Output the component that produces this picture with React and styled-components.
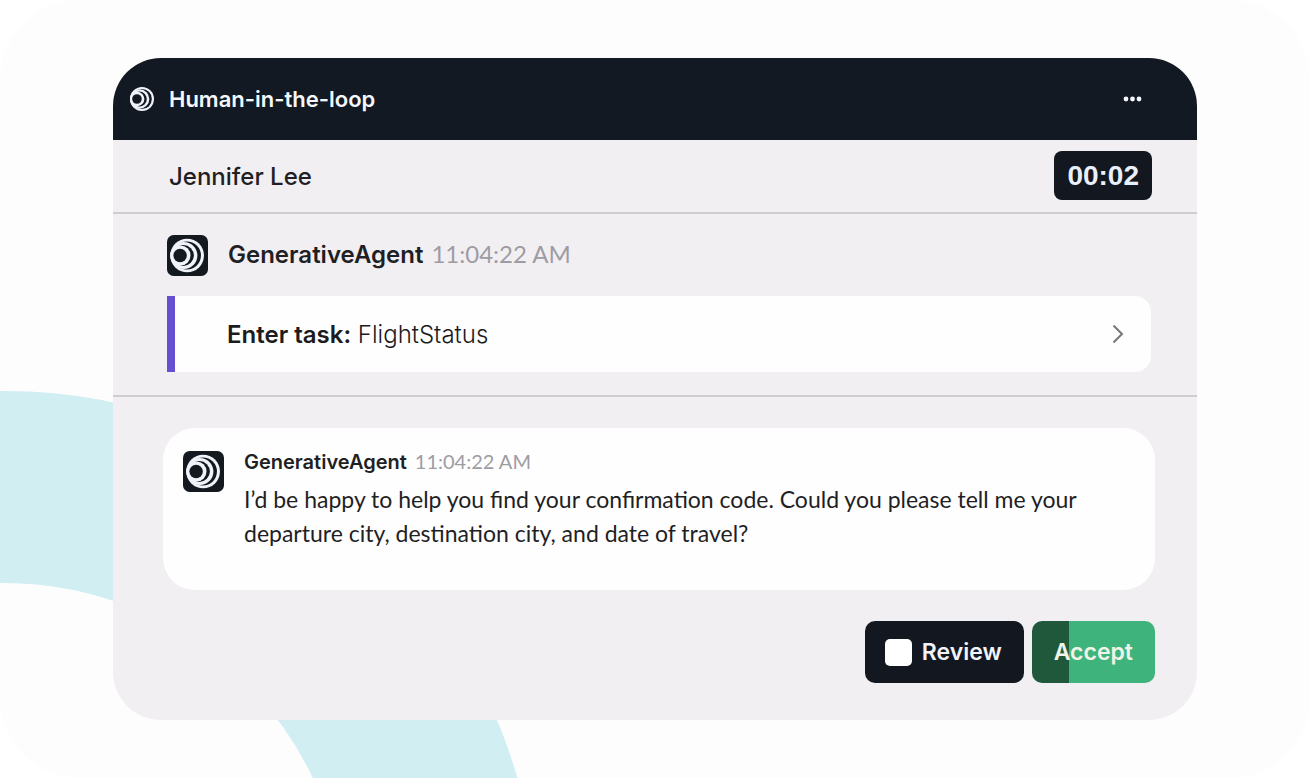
import React from "react";
import styled, { createGlobalStyle } from "styled-components";

const Rings = ({ ink }) => (
  <>
    <circle cx="60" cy="61" r="50" fill="#f1f3fa" />
    <circle cx="59" cy="61" r="42" fill={ink} />
    <circle cx="50" cy="61" r="40.500" fill="#f1f3fa" />
    <circle cx="49" cy="61" r="31" fill={ink} />
    <circle cx="40" cy="61" r="30" fill="#f1f3fa" />
    <circle cx="39" cy="61" r="20" fill={ink} />
  </>
);

const Logo = () => (
  <svg width="24" height="24" viewBox="10 11 100 100" aria-hidden="true">
    <Rings ink="#121922" />
  </svg>
);

const Avatar = () => (
  <AvatarSvg viewBox="0 0 122 122" aria-hidden="true">
    <rect width="122" height="122" rx="20" fill="#14181f" />
    <Rings ink="#14181f" />
  </AvatarSvg>
);

const App = () => (
  <>
    <GlobalStyle />
    <Page>
      <Backdrop aria-hidden="true">
        <circle
          cx="4"
          cy="925"
          r="438"
          fill="none"
          stroke="#d1eef3"
          strokeWidth="192"
        />
      </Backdrop>

      <Card>
        <Header>
          <Logo />
          <h1>Human-in-the-loop</h1>
          <MenuButton aria-label="More options">
            <svg width="20" height="6" viewBox="0 0 20 6">
              <circle cx="3" cy="3" r="2.4" />
              <circle cx="9.500" cy="3" r="2.4" />
              <circle cx="16" cy="3" r="2.4" />
            </svg>
          </MenuButton>
        </Header>

        <CustomerBar>
          <h2>Jennifer Lee</h2>
          <Timer>00:02</Timer>
        </CustomerBar>

        <TaskSection>
          <AgentRow>
            <Avatar />
            <AgentHead>
              <AgentName $size={24}>GenerativeAgent</AgentName>
              <Time $size={24}>11:04:22 AM</Time>
            </AgentHead>
          </AgentRow>
          <TaskButton>
            <span>
              <strong>Enter task:</strong> FlightStatus
            </span>
            <svg width="12" height="20" viewBox="0 0 12 20" fill="none">
              <path d="M1.5 1.5 10 10l-8.500 8.500" stroke="#77757a" strokeWidth="2" />
            </svg>
          </TaskButton>
        </TaskSection>

        <ReplySection>
          <Message>
            <Avatar />
            <div>
              <MessageHead>
                <AgentName $size={20}>GenerativeAgent</AgentName>
                <Time $size={20}>11:04:22 AM</Time>
              </MessageHead>
              <p>
                I’d be happy to help you find your confirmation code. Could you
                please tell me your departure city, destination city, and date
                of travel?
              </p>
            </div>
          </Message>

          <Actions>
            <Review>
              <input type="checkbox" />
              Review
            </Review>
            <Accept>Accept</Accept>
          </Actions>
        </ReplySection>
      </Card>
    </Page>
  </>
);

const GlobalStyle = createGlobalStyle`
  * {
    box-sizing: border-box;
  }

  body {
    margin: 0;
    background: #fff;
    color: #1f1f24;
    font-family: Inter, "Liberation Sans", sans-serif;
  }

  h1, h2, p {
    margin: 0;
  }

  button {
    font-family: inherit;
    border: 0;
    cursor: pointer;
  }
`;

const Page = styled.main`
  position: relative;
  min-height: 100vh;
  padding: 58px 113px;
  background: #fdfdfd;
  border-radius: 80px;
  overflow: hidden;
`;

const Backdrop = styled.svg`
  position: absolute;
  inset: 0;
  width: 100%;
  height: 100%;
`;

const Card = styled.section`
  position: relative;
  background: #f2eff3;
  border-radius: 48px;
  overflow: hidden;
`;

const Header = styled.header`
  display: flex;
  align-items: center;
  gap: 15px;
  height: 82px;
  padding: 0 50px 0 17px;
  background: #121922;

  h1 {
    color: #f4f7fb;
    font-size: 22px;
    font-weight: 600;
  }
`;

const MenuButton = styled.button`
  display: flex;
  margin-left: auto;
  padding: 4px;
  background: none;
  fill: #f4f7fb;
`;

const CustomerBar = styled.div`
  display: flex;
  align-items: baseline;
  justify-content: space-between;
  padding: 11px 45px 12px 56px;
  border-bottom: 2px solid #cfcdd2;

  h2 {
    font-size: 24px;
    font-weight: 500;
  }
`;

const Timer = styled.time`
  padding: 0 13px;
  background: #121720;
  border-radius: 8px;
  color: #eaf0fa;
  font-family: "Liberation Sans", Arial, sans-serif;
  font-size: 28px;
  font-weight: 700;
  line-height: 49px;
`;

const TaskSection = styled.div`
  padding: 21px 46px 23px 54px;
  border-bottom: 2px solid #cfcdd2;
`;

const AvatarSvg = styled.svg`
  flex: none;
  width: 41px;
  height: 41px;
`;

const AgentRow = styled.div`
  display: flex;
  gap: 20px;
  margin-bottom: 20px;
`;

const AgentHead = styled.div`
  display: flex;
  align-items: baseline;
  line-height: 37px;
`;

const MessageHead = styled(AgentHead)`
  margin-bottom: 10px;
  line-height: 20px;
`;

const AgentName = styled.span`
  margin-right: 8px;
  font-size: ${(props) => props.$size}px;
  font-weight: 600;
`;

const Time = styled.time`
  color: #9e9ca3;
  font-family: Lato, sans-serif;
  font-size: ${(props) => props.$size}px;
`;

const TaskButton = styled.button`
  display: flex;
  align-items: center;
  justify-content: space-between;
  width: 100%;
  height: 76px;
  padding: 0 27px 0 52px;
  background: #fefefe;
  border-left: 8px solid #6650cf;
  border-radius: 0 16px 16px 0;
  color: #1b1b20;
  font-size: 24px;
  font-weight: 300;

  strong {
    font-weight: 600;
  }
`;

const ReplySection = styled.div`
  padding: 31px 42px 37px 50px;
`;

const Message = styled.article`
  display: flex;
  gap: 20px;
  padding: 23px 48px 40px 20px;
  background: #fefefe;
  border-radius: 32px;

  p {
    font-family: Lato, sans-serif;
    font-size: 23px;
    line-height: 34px;
  }
`;

const Actions = styled.div`
  display: flex;
  justify-content: flex-end;
  gap: 8px;
  margin-top: 31px;
`;

const Review = styled.label`
  display: flex;
  align-items: center;
  gap: 10px;
  height: 62px;
  padding: 0 22px 0 20px;
  background: #121720;
  border-radius: 10px;
  color: #f1f3fa;
  font-size: 23px;
  font-weight: 600;
  cursor: pointer;

  input {
    appearance: none;
    width: 27px;
    height: 27px;
    margin: 0;
    background: #fff;
    border-radius: 5px;
  }
`;

const Accept = styled.button`
  height: 62px;
  padding: 0 22px;
  background: linear-gradient(to right, #20583c 30%, #3eb37b 30%);
  border-radius: 10px;
  color: #f0f3e8;
  font-size: 23px;
  font-weight: 600;
`;

export default App;
